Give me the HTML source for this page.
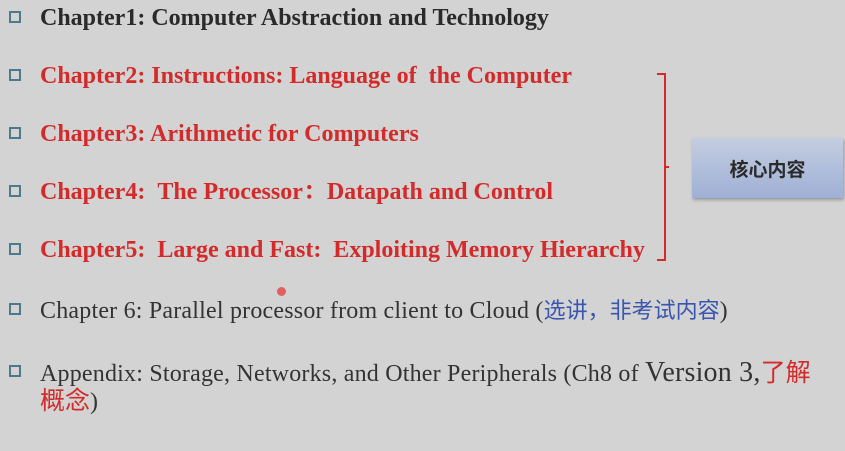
<!DOCTYPE html>
<html><head><meta charset="utf-8"><style>
body{margin:0;width:845px;height:451px;background:#d3d3d3;overflow:hidden;position:relative;font-family:"Liberation Serif","Noto Serif CJK SC",serif}
.b{position:absolute;left:9px;width:8px;height:8px;border:2px solid #4a7a8c;background:#d3d3d3}
.t{position:absolute;left:40px;white-space:nowrap;font-size:24px;line-height:26px}
.bold{font-weight:bold;color:#2a2a2a}
.red{color:#d42a2a;font-weight:bold}
.n{color:#333;font-size:24px;letter-spacing:0.2px}
.cj{font-family:"Noto Sans CJK SC",sans-serif;font-size:22px;letter-spacing:0}
</style></head><body>
<div class="b" style="top:11px"></div><div class="t bold" style="top:5px">Chapter1: Computer Abstraction and Technology</div>
<div class="b" style="top:69px"></div><div class="t red" style="top:63px">Chapter2: Instructions: Language of &nbsp;the Computer</div>
<div class="b" style="top:127px"></div><div class="t red" style="top:121px">Chapter3: Arithmetic for Computers</div>
<div class="b" style="top:185px"></div><div class="t red" style="top:179px">Chapter4: &nbsp;The Processor：Datapath and Control</div>
<div class="b" style="top:243px"></div><div class="t red" style="top:237px">Chapter5: &nbsp;Large and Fast: &nbsp;Exploiting Memory Hierarchy</div>
<div class="b" style="top:303px"></div><div class="t n" style="top:296px">Chapter 6: Parallel processor from client to Cloud (<span class="cj" style="color:#3a55b0">选讲，非考试内容</span>)</div>
<div class="b" style="top:365px"></div><div class="t n" style="top:358px">Appendix: Storage, Networks, and Other Peripherals (Ch8 of <span style="font-size:28px">Version 3,</span><span class="cj" style="color:#d42a2a;font-size:25px">了解</span></div>
<div class="t n" style="top:386px"><span class="cj" style="color:#d42a2a;font-size:25px">概念</span>)</div>
<svg style="position:absolute;left:655px;top:72px" width="20" height="192"><path d="M2 2H10V188H2M10 95H14" stroke="#d42a2a" stroke-width="2" fill="none"/></svg>
<div style="position:absolute;left:692px;top:138px;width:151px;height:60px;background:linear-gradient(#c4cde0,#9fb0d6);box-shadow:1px 2px 3px #999;display:flex;align-items:center;justify-content:center;font-family:'Noto Sans CJK SC',sans-serif;font-weight:bold;font-size:19px;color:#2a2a2a">核心内容</div>
<div style="position:absolute;left:277px;top:287px;width:9px;height:9px;border-radius:50%;background:#e06060"></div>
</body></html>
